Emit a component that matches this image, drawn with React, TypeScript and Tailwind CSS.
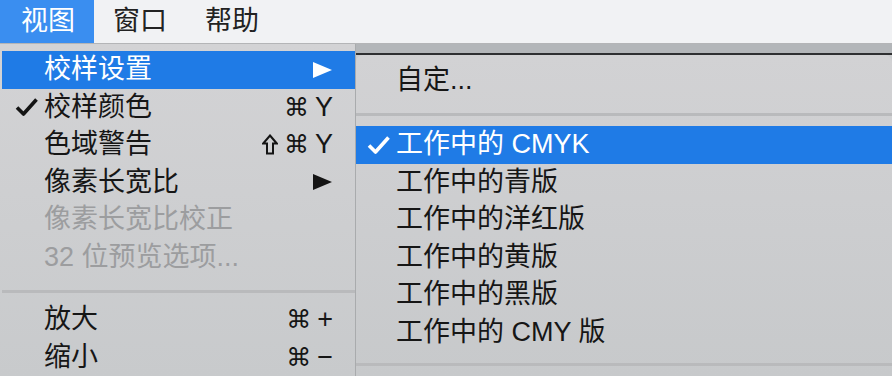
import React from "react";

type Item =
  | { sep: true }
  | {
      sep?: false;
      label: string;
      active?: boolean;
      check?: boolean;
      arrow?: boolean;
      disabled?: boolean;
      keys?: string[];
    };

const viewMenu: Item[] = [
  { label: "校样设置", active: true, arrow: true },
  { label: "校样颜色", check: true, keys: ["⌘", "Y"] },
  { label: "色域警告", keys: ["⇧", "⌘", "Y"] },
  { label: "像素长宽比", arrow: true },
  { label: "像素长宽比校正", disabled: true },
  { label: "32 位预览选项...", disabled: true },
  { sep: true },
  { label: "放大", keys: ["⌘", "+"] },
  { label: "缩小", keys: ["⌘", "−"] },
];

const proofMenu: Item[] = [
  { label: "工作中的 CMYK", active: true, check: true },
  { label: "工作中的青版" },
  { label: "工作中的洋红版" },
  { label: "工作中的黄版" },
  { label: "工作中的黑版" },
  { label: "工作中的 CMY 版" },
];

const Check = ({ white }: { white?: boolean }) => (
  <svg width="23" height="18" viewBox="0 0 23 18" className="shrink-0">
    <path
      d="M2 9.5 L8.5 16 L21.5 1.5"
      fill="none"
      stroke={white ? "#ffffff" : "#141414"}
      strokeWidth="3.6"
      strokeLinejoin="round"
    />
  </svg>
);

const Arrow = ({ white }: { white?: boolean }) => (
  <svg width="19" height="16" viewBox="0 0 19 16">
    <polygon points="0,0 19,8 0,16" fill={white ? "#ffffff" : "#141414"} />
  </svg>
);

const ShiftKey = () => (
  <svg width="16" height="21" viewBox="0 0 16 21" className="shrink-0">
    <polygon
      points="8,1.5 14.8,9.5 11,9.5 11,19.5 5,19.5 5,9.5 1.2,9.5"
      fill="none"
      stroke="#141414"
      strokeWidth="2"
      strokeLinejoin="miter"
    />
  </svg>
);

const MenuRow = ({ item, gutter }: { item: Exclude<Item, { sep: true }>; gutter: "left" | "right" }) => {
  const textColor = item.active ? "text-white" : item.disabled ? "text-[#9c9d9f]" : "text-[#161616]";
  return (
    <div
      className={`flex h-[37.5px] items-center ${item.active ? "bg-[#1f7be6]" : ""} ${textColor}`}
    >
      <div className={gutter === "left" ? "flex w-[42px] pl-[13px]" : "flex w-[40px] pl-[11px]"}>
        {item.check && <Check white={item.active} />}
      </div>
      <span className="flex-1 whitespace-nowrap leading-none">{item.label}</span>
      {item.arrow && (
        <div className="pr-[23px]">
          <Arrow white={item.active} />
        </div>
      )}
      {item.keys && (
        <div className="flex items-center gap-[6px] pr-[22px] leading-none">
          {item.keys.map((k, i) =>
            k === "⇧" ? (
              <ShiftKey key={i} />
            ) : (
              <span
                key={i}
                className={k === "⌘" ? "font-['DejaVu_Sans',sans-serif] text-[25px]" : "text-[27px]"}
              >
                {k}
              </span>
            )
          )}
        </div>
      )}
    </div>
  );
};

const Separator = ({ h, top }: { h: string; top: string }) => (
  <div className={`${h} ${top}`}>
    <div className="h-[3px] bg-[#b9babc]" />
  </div>
);

export default function App() {
  return (
    <div className="flex h-[376px] w-[892px] flex-col overflow-hidden bg-[#c9cbcd] font-['Liberation_Sans','Noto_Sans_CJK_SC','DejaVu_Sans',sans-serif] text-[27px]">
      {/* Menu bar */}
      <div className="flex h-[44px] shrink-0 items-center border-b border-[#b4b5b7] bg-[#f1f2f4] text-[#222]">
        <div className="flex h-full items-center bg-[#3a8ef0] pl-[21px] pr-[19px] text-white">视图</div>
        <div className="px-[19px]">窗口</div>
        <div className="px-[19px]">帮助</div>
      </div>

      <div className="flex flex-1">
        {/* View menu */}
        <div className="flex w-[356px] shrink-0 flex-col border-r border-[#a9abad] bg-gradient-to-b from-[#d3d3d5] to-[#c8cacc] pl-[2px] pt-[7px]">
          {viewMenu.map((item, i) =>
            item.sep ? (
              <Separator key={i} h="h-[25px]" top="pt-[14px]" />
            ) : (
              <MenuRow key={i} item={item} gutter="left" />
            )
          )}
        </div>

        {/* Proof setup submenu */}
        <div className="flex flex-1 flex-col">
          <div className="h-[9px] shrink-0 bg-[#b3b6b9]" />
          <div className="h-[2px] shrink-0 bg-[#2e2f31]" />
          <div className="flex flex-1 flex-col rounded-t-[7px] bg-gradient-to-b from-[#d2d2d4] to-[#c7c9cb] pt-[7px]">
            <MenuRow item={{ label: "自定..." }} gutter="right" />
            <Separator h="h-[26.5px]" top="pt-[13px]" />
            {proofMenu.map((item, i) => (
              <MenuRow key={i} item={item} gutter="right" />
            ))}
            <Separator h="h-[25px]" top="pt-[12px]" />
          </div>
        </div>
      </div>
    </div>
  );
}
